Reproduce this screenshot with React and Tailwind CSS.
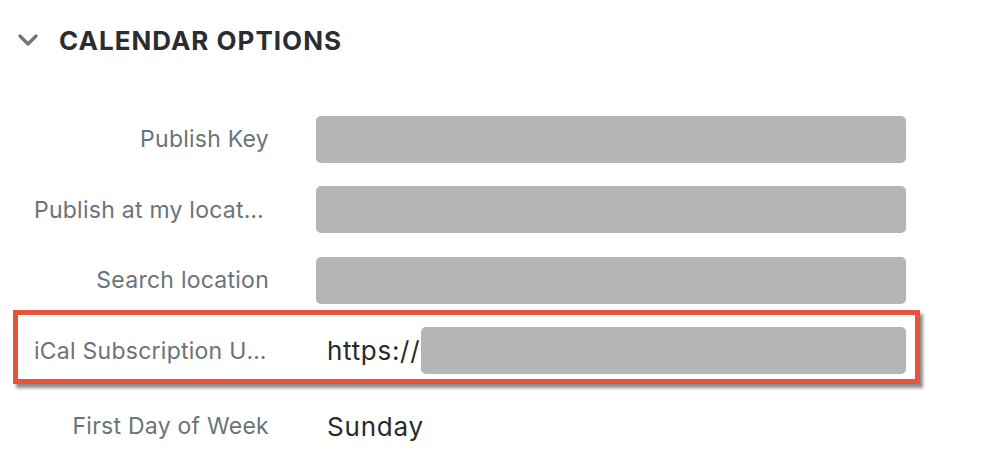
import React from "react";

const rows = [
  { label: "Publish Key", kind: "box" },
  { label: "Publish at my location", kind: "box" },
  { label: "Search location", kind: "box" },
  { label: "iCal Subscription URL", kind: "url", highlight: true },
  { label: "First Day of Week", kind: "text", value: "Sunday" },
];

function Chevron() {
  return (
    <svg width="20" height="12" viewBox="0 0 20 12" fill="none">
      <path d="M2 2l8 8 8-8" stroke="#6f767b" strokeWidth="3.2" strokeLinecap="round" strokeLinejoin="round" />
    </svg>
  );
}

export default function App() {
  return (
    <div className="w-[990px] h-[466px] bg-white overflow-hidden font-['Inter',sans-serif]">
      <div className="flex items-center h-[80px] pl-[18px]">
        <Chevron />
        <h2 className="ml-[21px] text-[26px] font-bold tracking-[1px] text-[#2b2d2f]">CALENDAR OPTIONS</h2>
      </div>
      <div className="pt-[24px]">
        {rows.map((row) => (
          <div
            key={row.label}
            className={"relative flex items-center h-[70.5px]" + (row.kind === "text" ? " mt-[5px]" : "")}
          >
            {row.highlight && (
              <div className="absolute left-[13px] top-[-6px] w-[907px] h-[74px] border-[5px] border-[#e8533a] shadow-[3px_4px_3px_rgba(0,0,0,0.45)]" />
            )}
            <div className="ml-[34px] w-[235px] truncate text-right text-[23px] tracking-[0.25px] text-[#6b7378]">{row.label}</div>
            <div className="ml-[47px] w-[590px] flex items-center">
              {row.kind === "box" && <div className="h-[47px] w-full rounded-[5px] bg-[#b4b5b7]" />}
              {row.kind === "url" && (
                <>
                  <span className="ml-[11px] text-[26px] tracking-[0.7px] text-[#2a2a2a]">https://</span>
                  <div className="ml-[1px] h-[47px] flex-1 rounded-[5px] bg-[#b4b5b7]" />
                </>
              )}
              {row.kind === "text" && (
                <span className="ml-[11px] text-[26px] tracking-[0.8px] text-[#2a2a2a]">{row.value}</span>
              )}
            </div>
          </div>
        ))}
      </div>
    </div>
  );
}
